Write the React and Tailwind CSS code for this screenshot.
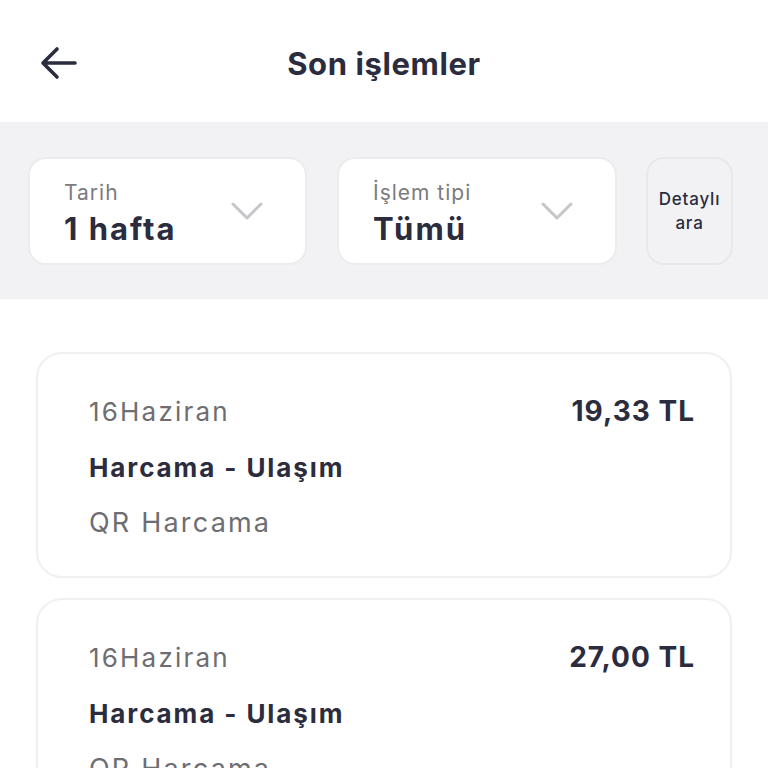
import React from 'react';

const font = { fontFamily: 'Inter, "Noto Sans", sans-serif' };

const Chevron = () => (
  <svg width="32" height="20" viewBox="0 0 32 20" fill="none">
    <path d="M2 3l14 14L30 3" stroke="#c6c6ca" strokeWidth="3" strokeLinecap="round" strokeLinejoin="round" />
  </svg>
);

const FilterCard = ({ label, value, width }) => (
  <div className={`${width} h-[108px] bg-white rounded-[18px] border-2 border-[#ececee] flex items-center justify-between pl-[34px] pr-[42px]`}>
    <div className="flex flex-col mt-[8px]">
      <span className="text-[21px] leading-[26px] tracking-[1px] text-[#7b7b80]">{label}</span>
      <span className="text-[31px] leading-[42px] tracking-[2px] font-bold text-[#2b2c3e] mt-[2px]">{value}</span>
    </div>
    <Chevron />
  </div>
);

const TxCard = ({ amount }) => (
  <div className="bg-white rounded-[26px] border-2 border-[#f0f0f2] pl-[51px] pr-[35px] pt-[38px] h-[226px]">
    <div className="flex items-center justify-between h-[38px]">
      <span className="text-[26px] tracking-[2.2px] text-[#6d6d72]">16Haziran</span>
      <span className="text-[28px] tracking-[1px] font-bold text-[#2b2c3e]">{amount}</span>
    </div>
    <div className="h-[38px] mt-[18px] flex items-center text-[26px] tracking-[1.9px] font-bold text-[#2b2c3e]">Harcama - Ulaşım</div>
    <div className="h-[38px] mt-[18px] flex items-center text-[27px] tracking-[2.2px] text-[#6d6d72]">QR Harcama</div>
  </div>
);

export default function App() {
  return (
    <div className="w-[768px] h-[768px] overflow-hidden bg-white" style={font}>
      <div className="h-[122px] grid grid-cols-[1fr_auto_1fr] items-center px-[40px]">
        <svg width="38" height="36" viewBox="0 0 38 36" fill="none" className="mt-[4px]">
          <path d="M35 18H4M17 4L3 18l14 14" stroke="#2b2c3e" strokeWidth="3.6" strokeLinecap="round" strokeLinejoin="round" />
        </svg>
        <h1 className="text-[31px] tracking-[0.6px] font-bold text-[#2b2c3e] mt-[6px]">Son işlemler</h1>
        <div />
      </div>
      <div className="h-[177px] bg-[#f2f2f4] flex items-start pt-[35px] pl-[28px] gap-[30px]">
        <FilterCard label="Tarih" value="1 hafta" width="w-[279px]" />
        <div className="flex gap-[29px]">
          <FilterCard label="İşlem tipi" value="Tümü" width="w-[280px]" />
          <div className="w-[87px] h-[108px] rounded-[18px] border-2 border-[#e8e8ea] flex items-center justify-center text-center text-[17px] leading-[24px] tracking-[0.8px] text-[#2b2c3e] font-medium">
            Detaylı<br />ara
          </div>
        </div>
      </div>
      <div className="px-[36px] pt-[53px] flex flex-col gap-[20px]">
        <TxCard amount="19,33 TL" />
        <TxCard amount="27,00 TL" />
      </div>
    </div>
  );
}
